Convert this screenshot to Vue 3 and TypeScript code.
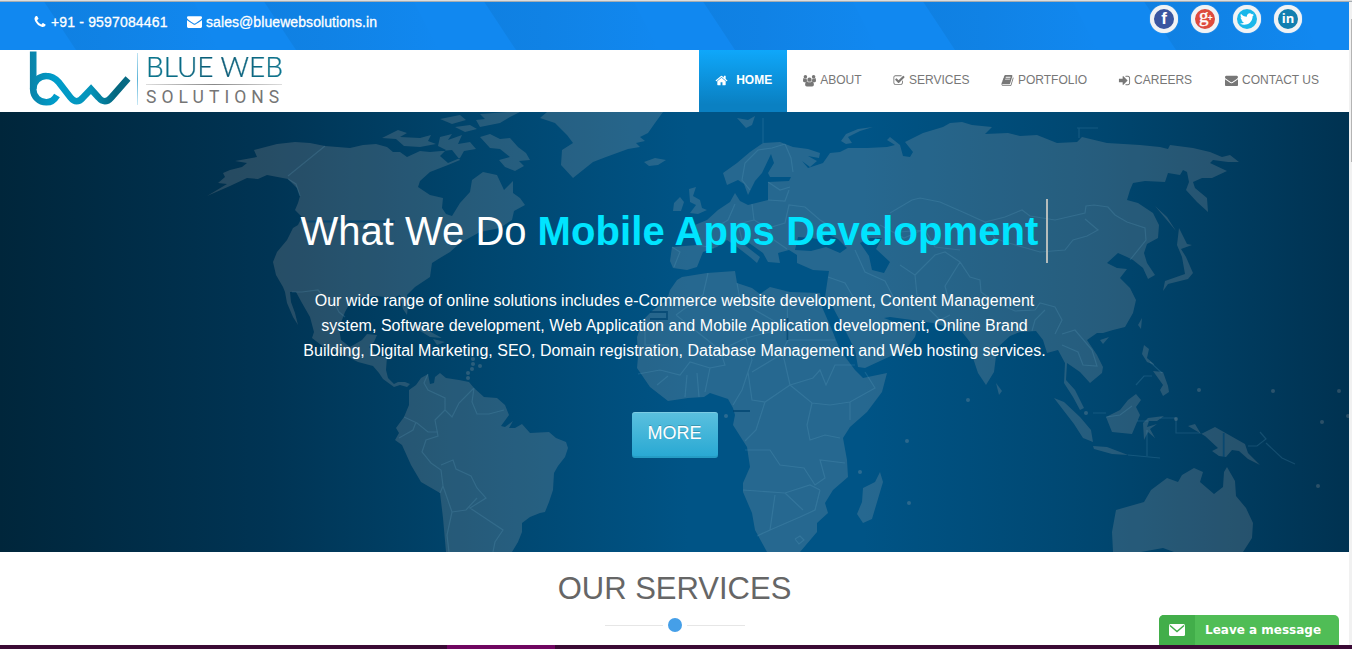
<script setup lang="ts">
interface NavItem { label: string; icon: string; active?: boolean }

const icons: Record<string, string> = {
  phone: 'M1600 1240q0 27-10 70.5t-21 68.5q-21 50-122 106-94 51-186 51-27 0-53-3.5t-57.5-12.5-47-14.5-55.5-20.5-49-18q-98-35-175-83-127-79-264-216t-216-264q-48-77-83-175-3-9-18-49t-20.5-55.5-14.5-47-12.5-57.5-3.5-53q0-92 51-186 56-101 106-122 25-11 68.5-21t70.5-10q14 0 21 3 18 6 53 76 11 19 30 54t35 63.5 31 53.5q3 4 17.5 25t21.5 35.5 7 28.5q0 20-28.5 50t-62 55-62 53-28.5 46q0 9 5 22.5t8.5 20.5 14 24 11.5 19q76 137 174 235t235 174q2 1 19 11.5t24 14 20.5 8.5 22.5 5q18 0 46-28.5t53-62 55-62 50-28.5q14 0 28.5 7t35.5 21.5 25 17.5q25 15 53.5 31t63.5 35 54 30q70 35 76 53 3 7 3 21z',
  mail: 'M1792 710v794q0 66-47 113t-113 47h-1472q-66 0-113-47t-47-113v-794q44 49 101 87 362 246 497 345 57 42 92.5 65.5t94.5 48 110 24.5h2q51 0 110-24.5t94.5-48 92.5-65.5q170-123 498-345 57-39 100-87zm0-294q0 79-49 151t-122 123q-376 261-468 325-10 7-42.5 31t-54 38.5-52 32.5-57.5 27-50 9h-2q-23 0-50-9t-57.5-27-52-32.5-54-38.5-42.5-31q-91-64-262-182.5t-205-142.5q-62-42-117-115.5t-55-136.5q0-78 41.5-130t118.5-52h1472q65 0 112.5 47t47.5 113z',
  home: 'M1472 992v480q0 26-19 45t-45 19h-384v-384h-256v384h-384q-26 0-45-19t-19-45v-480q0-1 .5-3t.5-3l575-474 575 474q1 2 1 6zm223-69l-62 74q-8 9-21 11h-3q-13 0-21-7l-692-577-692 577q-12 8-24 7-13-2-21-11l-62-74q-8-10-7-23.5t11-21.5l719-599q32-26 76-26t76 26l244 204v-195q0-14 9-23t23-9h192q14 0 23 9t9 23v408l219 182q10 8 11 21.5t-7 23.5z',
  users: 'M896 480a300 300 0 1 1 0 600a300 300 0 1 1 0-600zM330 128a245 245 0 1 1 0 490a245 245 0 1 1 0-490zM1462 128a245 245 0 1 1 0 490a245 245 0 1 1 0-490zM90 560q80 100 240 100q100 0 190-40q-40 240 100 390q-160 0-250 120h-200q-170 0-170-160q0-400 90-410zM1702 560q-80 100-240 100q-100 0-190-40q40 240-100 390q160 0 250 120h200q170 0 170-160q0-400-90-410zM560 1020q130 120 336 120t336-120q270 10 270 470q0 240-240 240h-732q-240 0-240-240q0-460 270-470z',
  check: 'M1472 930v318q0 119-84.5 203.5t-203.5 84.5h-832q-119 0-203.5-84.5t-84.5-203.5v-832q0-119 84.5-203.5t203.5-84.5h832q63 0 117 25 15 7 18 23 3 17-9 29l-49 49q-10 10-23 10-3 0-9-2-23-6-45-6h-832q-66 0-113 47t-47 113v832q0 66 47 113t113 47h832q66 0 113-47t47-113v-254q0-13 9-22l64-64q10-10 23-10 6 0 12 3 20 8 20 29zm231-489l-814 814q-24 24-57 24t-57-24l-430-430q-24-24-24-57t24-57l110-110q24-24 57-24t57 24l263 263 647-647q24-24 57-24t57 24l110 110q24 24 24 57t-24 57z',
  book: 'M1703 478q40 57 18 129l-275 906q-19 64-76.5 107.5t-122.5 43.5h-923q-77 0-148.5-53.5t-99.5-131.5q-24-67-2-127 0-4 3-27t4-37q1-8-3-21.5t-3-19.5q2-11 8-21t16.5-23.5 16.5-23.5q23-38 45-91.5t30-91.5q3-10 .5-30t-.5-28q3-11 17-28t17-23q21-36 42-92t25-90q1-9-2.5-32t.5-28q4-13 22-30.5t22-22.5q19-26 42.5-84.5t27.5-96.5q1-8-3-25.5t-2-26.5q2-8 9-18t18-23 17-21q8-12 16.5-30.5t15-35 16-36 19.500-32 26.500-23.500 36-11.500 47.500 5.500l-1 3q38-9 51-9h761q74 0 114 56t18 130l-274 906q-36 119-71.500 153.500t-128.500 34.500h-869q-27 0-38 15-11 16-1 43 24 70 144 70h923q29 0 56-15.500t35-41.500l300-987q7-22 5-57 38 15 59 43zm-1064 2q-4 13 2 22.500t20 9.500h608q13 0 25.500-9.500t16.500-22.500l21-64q4-13-2-22.500t-20-9.500h-608q-13 0-25.500 9.500t-16.500 22.500zm-83 256q-4 13 2 22.500t20 9.500h608q13 0 25.500-9.500t16.500-22.500l21-64q4-13-2-22.500t-20-9.500h-608q-13 0-25.500 9.500t-16.500 22.500z',
  signin: 'M1312 896q0 26-19 45l-544 544q-19 19-45 19t-45-19-19-45v-288h-448q-26 0-45-19t-19-45v-384q0-26 19-45t45-19h448v-288q0-26 19-45t45-19 45 19l544 544q19 19 19 45zm352-352v704q0 119-84.5 203.5t-203.5 84.5h-320q-13 0-22.5-9.5t-9.5-22.5q0-4-1-20t-.5-26.5 3-23.5 10-19.5 20.5-6.5h320q66 0 113-47t47-113v-704q0-66-47-113t-113-47h-312l-11.5-1-11.5-3-8-5.5-7-9-2-13.5q0-4-1-20t-.5-26.5 3-23.5 10-19.5 20.5-6.5h320q119 0 203.5 84.5t84.5 203.5z',
  twitter: 'M1684 408q-67 98-162 167 1 14 1 42 0 130-38 259.5t-115.5 248.5-184.5 210.5-258 146-323 54.5q-271 0-496-145 35 4 78 4 225 0 401-138-105-2-188-64.5t-114-159.5q33 5 61 5 43 0 85-11-112-23-185.5-111.5t-73.5-205.5v-4q68 38 146 41-66-44-105-115t-39-154q0-88 44-163 121 149 294.5 238.5t371.5 99.5q-8-38-8-74 0-134 94.5-228.5t228.5-94.5q140 0 236 102 109-21 205-78-37 115-142 178 93-10 186-50z',
}

const nav: NavItem[] = [
  { label: 'HOME', icon: 'home', active: true },
  { label: 'ABOUT', icon: 'users' },
  { label: 'SERVICES', icon: 'check' },
  { label: 'PORTFOLIO', icon: 'book' },
  { label: 'CAREERS', icon: 'signin' },
  { label: 'CONTACT US', icon: 'mail' },
]

const bands: number[] = [-177, 43, 263, 483, 702, 922, 1143]

const land: string[] = [
  // North and Central America
  'M207 196L230 186 247 178 258 179 267 175 288 179 297 188 300 196 298 203 295 210 302 217 298 225 293 228 287 240 277 252 273 262 276 275 283 287 285 292 287 303 293 317 298 325 295 313 291 302 290 292 296 292 302 303 310 317 314 332 312 338 325 348 344 355 358 362 373 366 379 373 383 379 394 387 400 385 407 387 410 384 405 382 398 382 394 384 388 378 386 370 387 357 377 356 369 347 374 342 377 335 367 334 362 340 350 347 341 340 339 328 345 312 350 303 362 297 377 296 393 298 400 295 403 309 407 315 408 305 407 295 415 287 430 277 432 263 440 258 450 252 460 243 480 232 500 228 512 220 514 211 525 205 520 198 513 193 513 181 504 190 497 175 483 172 472 180 470 192 460 203 452 216 446 214 442 208 443 198 430 195 418 187 420 181 430 172 448 165 460 160 452 150 430 152 420 151 407 157 400 152 393 152 387 147 376 144 363 145 350 148 325 146 310 143 295 142 277 144 254 150 257 157 235 161 247 163 242 167 230 170 223 173 225 177 218 183 227 184z',
  // Arctic islands
  'M382 138L398 130 407 133 400 137 420 138 431 135 428 141 436 144 420 147 404 146 396 139zM440 137L452 134 448 140 462 135 458 144 470 142 476 149 464 151 460 158 448 163 440 156 446 150 438 146zM480 127L500 123 510 117 520 112 507 112 480 114 485 119 476 120zM480 137L490 134 500 139 510 138 518 147 526 153 530 160 519 161 524 166 515 171 505 167 499 160 510 157 500 149 490 148zM440 119L460 115 466 120 452 124zM455 127L470 125 477 129 465 132z',
  // Greenland, Iceland, Svalbard, Novaya Zemlya
  'M540 118L555 123 567 135 573 143 562 150 561 165 573 178 583 170 593 162 606 157 617 153 628 149 640 147 636 143 645 141 640 137 648 133 655 123 663 112 547 112zM644 162L655 158 666 160 658 165 649 166zM737 118L748 120 755 116 752 125 746 128zM873 127L860 131 848 137 852 143 846 144 841 141 846 134 858 129z',
  // South America
  'M409 390L416 385 421 378 428 374 430 384 434 383 435 377 440 373 446 378 459 380 469 382 474 388 484 397 497 398 505 405 509 415 501 426 505 427 513 421 509 428 515 428 522 424 530 433 549 432 556 438 566 442 568 448 565 457 558 466 554 473 553 490 549 502 545 512 540 513 530 517 522 523 522 532 518 542 512 552 446 552 443 518 440 493 421 482 411 465 402 445 395 440 399 433 396 428 404 417 409 405z',
  // British Isles and mainland Eurasia, with the Black and Caspian seas cut out
  'M689 189L696 187 693 196 700 200 702 208 707 210 698 214 690 213 696 205 690 202zM674 203L680 197 684 202 681 211 673 211zM762 173L755 181 748 195 744 184 738 180 727 185 723 173 737 163 750 152 763 143 780 142 793 147 808 149 820 153 819 158 808 156 817 161 810 167 802 161 808 168 823 163 830 153 840 152 848 148 867 148 887 147 895 145 887 140 890 137 900 145 903 156 910 157 913 152 905 142 923 133 943 127 950 123 962 122 972 125 992 127 985 134 1008 133 1020 136 1037 135 1057 143 1077 142 1082 137 1107 143 1140 145 1160 147 1168 149 1170 145 1193 148 1210 152 1222 157 1230 155 1239 162 1228 162 1213 160 1210 163 1227 171 1212 178 1202 178 1193 182 1195 188 1207 198 1208 212 1197 202 1186 190 1189 182 1187 172 1183 170 1180 175 1168 173 1165 182 1145 181 1133 183 1130 190 1127 200 1138 203 1153 213 1159 225 1158 238 1147 244 1144 253 1147 263 1155 275 1148 279 1143 268 1133 260 1127 257 1118 253 1107 263 1117 268 1127 269 1120 278 1130 288 1136 300 1133 313 1125 327 1113 330 1103 333 1097 333 1087 340 1097 355 1103 367 1102 373 1090 383 1080 372 1067 363 1066 380 1075 390 1084 408 1080 410 1073 397 1064 383 1065 363 1058 350 1047 353 1043 340 1036 331 1020 332 1010 336 997 348 994 372 986 385 978 373 973 358 970 342 962 332 950 328 933 323 912 320 890 317 884 318 900 324 905 320 917 330 915 337 905 350 893 355 865 368 858 367 855 350 845 330 830 302 825 297 828 277 829 271 813 270 797 263 797 255 789 250 778 253 780 263 768 262 763 253 745 240 742 243 760 257 757 263 750 257 737 247 727 240 717 247 703 252 697 267 687 270 673 268 670 261 672 247 697 245 700 236 690 227 707 220 718 210 730 202 735 193 740 201 748 205 768 200 768 182 789 181 791 177 770 177 768 173 774 163 771 154zM798 237L795 250 811 251 826 247 840 253 847 248 838 239 826 233 822 240 812 238zM860 243L870 238 882 238 876 249 890 262 884 273 872 270 869 256z',
  // Africa and Madagascar
  'M677 280L682 277 707 273 735 271 737 283 752 288 760 294 770 287 790 292 820 293 822 307 832 330 840 350 855 370 863 378 887 373 882 392 867 412 850 427 843 438 847 460 848 477 833 490 825 503 828 513 817 523 817 532 800 552 767 552 755 530 752 513 743 492 743 483 750 467 747 447 733 425 735 415 733 408 728 399 710 393 704 397 688 398 668 401 650 387 637 368 638 357 637 337 643 320 653 310 667 300 670 290zM880 472L883 482 872 519 863 523 857 514 862 502 863 488 875 482z',
  // Asian islands
  'M996 383L1002 391 999 395zM1054 398L1064 402 1080 417 1091 430 1093 442 1083 438 1074 424zM1093 446L1107 447 1128 455 1112 454 1094 449zM1106 417L1120 410 1128 400 1136 394 1141 400 1136 407 1140 415 1132 434 1112 432zM1143 423L1148 418 1164 416 1157 421 1149 421 1147 427 1157 424 1150 429 1155 438 1148 432 1144 440zM1188 426L1195 424 1201 434 1215 427 1245 444 1248 453 1260 465 1248 459 1239 451 1232 450 1226 457 1219 456 1212 451 1218 448 1205 436zM1144 345L1149 349 1147 358 1155 365 1147 362 1142 354zM1153 371L1163 372 1168 386 1169 392 1163 396 1160 390 1163 385zM1138 325L1142 318 1141 329zM1155 206L1167 217 1176 231 1171 225zM1179 228L1187 244 1192 245 1181 249 1186 257 1193 273 1188 279 1168 284 1163 291 1165 281 1185 274 1182 257 1177 245zM1100 340L1109 337 1103 344z',
  // Australia
  'M1116 510L1144 502 1151 490 1167 478 1178 482 1182 475 1194 468 1203 472 1200 482 1214 494 1223 487 1224 472 1227 467 1235 481 1236 496 1246 508 1253 523 1252 538 1243 552 1174 552 1163 548 1141 552 1113 552 1112 532z',
  // Caribbean
  'M408 326L420 325 429 331 442 338 430 337 417 329zM433 339L445 342 437 345z',
]

const borders: string[] = [
  'M325 146L288 176M288 179L296 184 300 196M292 292L302 292 318 290 324 297 333 300 339 312 345 317',
  'M428 374L424 383 428 390 445 398 445 410 452 417 459 403 474 388M474 388L472 402 477 414 489 414 504 410M445 410L435 420 438 436 426 440 422 452 431 463 441 470 443 486 440 493M404 417L417 423 428 432 438 432M441 465L453 460 456 469 471 476 477 488 486 498 470 508 485 518 503 530 495 542 493 552M443 486L452 512 447 535 449 552M452 512L466 510 477 498M399 438L413 430 416 422',
  'M750 190L742 180 745 163 758 150 772 148 785 144M785 144L791 158 793 172M768 200L785 201 789 190M768 182L780 190 790 187M752 204L754 220 768 228 785 223 789 205 805 207 820 220 835 229M735 204L728 220 718 226M754 220L738 224 742 240M768 228L774 240 787 249M672 247L680 252 674 267M697 245L714 248',
  'M890 213L912 200 920 198 940 202 965 213 985 222 1005 217 1022 210 1030 216 1055 220 1085 213 1086 206 1094 205 1108 207 1115 215 1127 222 1145 228 1146 240 1130 260M985 222L995 238 1005 242 1040 252 1065 250 1073 240 1087 236 1098 230 1085 219M900 265L915 275 917 295 930 310 940 320 950 315M915 275L935 255 945 252 960 262 970 277 980 280 981 292 995 302 1015 311 1035 310 1040 303 1055 307 1062 320 1055 334M960 262L945 286 950 305M1032 331L1035 320 1045 310M1062 334L1075 330 1092 350 1097 366 1083 365 1078 352 1062 345M828 277L845 283 856 302 870 305M855 250L865 272 885 281 900 310M900 232L925 230 935 247 960 250M880 225L904 238 927 228',
  'M708 273L703 295 676 315M737 283L740 300 755 310 786 328M787 292L788 340M788 340H835M645 320V345H669M676 315L720 350 746 338 786 328M720 350L725 365 710 368 705 392M746 338L752 360 742 390 733 405M752 372L780 355 788 340M782 350L790 385 813 378 820 370 826 385 835 365 855 365M790 385L765 402 752 400 748 372M790 385L812 403 830 405 850 402 875 388 865 372M765 402L756 430 745 441M812 403L807 425 810 440 825 435 840 438M850 402L850 420M745 450L770 450 780 465 804 468 815 485 825 478 820 460 845 463M743 490L785 493 810 485 820 490M775 495L770 530 757 536M770 530L800 517 815 510 820 490M785 493L803 510M795 539L800 536 804 540 799 544 795 539M638 374L660 370 680 375 690 362 710 368M657 385L668 376M685 397L687 375M699 397L697 373',
  'M1106 417L1120 415 1132 406M1093 413H1106M1137 421H1148M1160 418H1176V433H1200M1248 446H1257L1266 439 1260 432M1266 443L1282 458 1295 464M1147 430V456M1128 455L1160 458M1136 385L1144 376H1152M1150 362L1162 373M763 118V143M1079 128V138M1077 128H1098',
]

const channels = 'M306 221.500H395M1223.700 433V457M787.500 318V340M650 312H667V319H650M733 411H750'

const dots: number[][] = [[907, 441], [909, 503], [968, 400], [860, 472], [1199, 390], [1273, 391], [1339, 391], [1322, 422], [1348, 416], [1318, 486], [1176, 419], [726, 416], [1086, 413], [473, 359], [473, 364], [472, 369], [468, 373], [480, 366], [468, 378]]
</script>

<template>
  <div class="page">
    <div class="window-edge"></div>
    <div class="body-row">
      <div class="content">
        <div class="topbar">
          <svg class="topbar-bg" width="1349" height="48" viewBox="0 2 1349 48" aria-hidden="true">
            <defs>
              <linearGradient id="band" x1="0" x2="1" y1="0" y2="0">
                <stop offset="0" stop-color="#0f80e2" />
                <stop offset=".35" stop-color="#1082e5" />
                <stop offset="1" stop-color="#1188f0" />
              </linearGradient>
            </defs>
            <polygon v-for="b in bands" :key="b" :points="`${b},0 ${b + 150},0 ${b + 176},50 ${b + 33},50`" fill="url(#band)" />
          </svg>
          <div class="contact">
            <svg class="ic phone" viewBox="0 0 1792 1792"><path :d="icons.phone" /></svg>
            <span class="tel">+91 - 9597084461</span>
            <svg class="ic envelope" viewBox="0 0 1792 1792"><path :d="icons.mail" /></svg>
            <span class="email">sales@bluewebsolutions.in</span>
          </div>
          <div class="social">
            <span class="soc fb"><b>f</b></span>
            <span class="soc gp"><b>g</b><i>+</i></span>
            <span class="soc tw"><svg viewBox="0 0 1792 1792"><path :d="icons.twitter" /></svg></span>
            <span class="soc li"><b>in</b></span>
          </div>
        </div>

        <header class="header">
          <div class="logo">
            <svg width="114" height="60" viewBox="28 50 114 60" aria-hidden="true">
              <defs>
                <linearGradient id="mark" gradientUnits="userSpaceOnUse" x1="30" y1="0" x2="131" y2="0">
                  <stop offset="0" stop-color="#0b83a8" />
                  <stop offset=".25" stop-color="#009dcb" />
                  <stop offset=".6" stop-color="#0593b9" />
                  <stop offset=".85" stop-color="#03677f" />
                  <stop offset="1" stop-color="#0a6c86" />
                </linearGradient>
                <linearGradient id="rule" x1="0" x2="0" y1="0" y2="1">
                  <stop offset="0" stop-color="#bfe3f2" />
                  <stop offset=".5" stop-color="#5cb4d8" />
                  <stop offset="1" stop-color="#c9e8f5" />
                </linearGradient>
              </defs>
              <g fill="none" stroke="url(#mark)" stroke-width="6.6" stroke-linejoin="miter">
                <path d="M33.200 51.500V89.500A13 13 0 0 0 46.500 102.300Q53 102.300 57 95.500" />
                <path d="M33.200 89A13 13 0 0 1 46.500 76Q53 76 58.500 82L70.500 97.500Q76.500 105 83 97.500L91 89.200L98.500 97.500Q104.800 105 111.300 97.500L128 78.500" />
              </g>
              <rect x="137" y="53" width="1" height="52" fill="url(#rule)" />
            </svg>
            <div class="logo-text">
              <span class="l1">BLUE WEB</span>
              <span class="l-rule"></span>
              <span class="l2">SOLUTIONS</span>
            </div>
          </div>
          <nav class="nav">
            <a v-for="n in nav" :key="n.label" :class="['item', n.icon, { active: n.active }]">
              <svg class="ic" viewBox="0 0 1792 1792"><path :d="icons[n.icon]" /></svg><span>{{ n.label }}</span>
            </a>
          </nav>
        </header>

        <section class="hero">
          <svg class="map" width="1349" height="440" viewBox="0 112 1349 440" aria-hidden="true">
            <path :d="land.join('')" fill="rgba(255,222,200,.15)" fill-rule="evenodd" />
            <path :d="borders.join('')" fill="none" stroke="rgba(120,185,215,.17)" stroke-width="1.2" />
            <path :d="channels" fill="none" stroke="rgba(0,68,112,.75)" stroke-width="1.8" />
            <circle v-for="(d, i) in dots" :key="i" :cx="d[0]" :cy="d[1]" r="2" fill="rgba(255,222,200,.17)" />
          </svg>
          <h1><span class="lead">What We Do</span><span class="typed">Mobile Apps Development</span><span class="caret"></span></h1>
          <p>
            <span class="p1">Our wide range of online solutions includes e-Commerce website development, Content Management</span>
            <span class="p2">system, Software development, Web Application and Mobile Application development, Online Brand</span>
            <span class="p3">Building, Digital Marketing, SEO, Domain registration, Database Management and Web hosting services.</span>
          </p>
          <button class="more">MORE</button>
        </section>

        <section class="services">
          <h2>OUR SERVICES</h2>
          <div class="divider"><span></span><i></i><span></span></div>
        </section>
      </div>
      <div class="scroll"><div class="thumb"></div></div>
    </div>
    <div class="footer-strip"></div>
    <div class="chat">
      <div class="chat-icon">
        <svg width="16" height="12" viewBox="0 0 16 12"><rect width="16" height="12" rx="1.500" fill="#fff" /><path d="M1 1.500L8 7.500L15 1.500" fill="none" stroke="#42ae4a" stroke-width="1.500" /></svg>
      </div>
      <span class="chat-label">Leave a message</span>
    </div>
  </div>
</template>

<style>
html, body { margin: 0; overflow: hidden; background: #fff; }
</style>

<style scoped>
.page { position: relative; width: 1352px; height: 649px; overflow: hidden; background: #fff; font-family: "Liberation Sans", Arial, sans-serif; display: flex; flex-direction: column; }
.window-edge { height: 1px; flex: none; background: #dcdcdc; border-bottom: 1px solid #a5acb2; }
.body-row { display: flex; height: 643px; flex: none; }
.content { width: 1349px; flex: none; }
.topbar { position: relative; height: 48px; background: #1188f0; display: flex; justify-content: space-between; overflow: hidden; }
.topbar-bg { position: absolute; left: 0; top: 0; }
.contact { position: relative; display: flex; align-items: center; height: 39px; padding-left: 33px; color: #fff; font-size: 14px; white-space: nowrap; -webkit-text-stroke: .3px #fff; }
.ic { display: block; fill: currentColor; flex: none; }
.phone { width: 14px; height: 14px; margin-right: 4px; }
.envelope { width: 15px; height: 15px; margin-right: 4px; }
.tel { width: 136px; letter-spacing: .16px; }
.email { letter-spacing: .08px; }
.social { position: relative; display: flex; gap: 13.300px; padding: 3px 47px 0 0; }
.soc { box-sizing: border-box; width: 28px; height: 28px; border-radius: 50%; border: 4px solid #f1f3f5; display: flex; align-items: center; justify-content: center; color: #fff; box-shadow: 0 0 1px #d5e6f5; }
.fb { background: #3a56a0; }
.fb b { font: bold 17px/20px "Liberation Sans", sans-serif; }
.gp { background: #dd4b3e; }
.gp b { font: 19px/14px "Liberation Serif", serif; margin: -6px 0 0 1px; -webkit-text-stroke: .4px #fff; }
.gp i { font: normal bold 9px/10px "Liberation Sans", sans-serif; margin: -3px 0 0 -1px; }
.tw { background: #1ab7ea; }
.tw svg { width: 16px; height: 16px; fill: #fff; }
.li { background: #127fb0; }
.li b { font: bold 13px/16px "Open Sans", sans-serif; margin-top: -2px; }

.header { height: 62px; display: flex; justify-content: space-between; background: #fff; }
.logo { display: flex; padding-left: 28px; }
.logo-text { display: flex; flex-direction: column; width: 150px; margin-left: 4px; white-space: nowrap; }
.l1 { height: 34px; font: 300 28px/32px Lato, sans-serif; letter-spacing: 0; background: linear-gradient(90deg, #06788f, #0b5873 50%, #0a7c94); -webkit-background-clip: text; background-clip: text; color: transparent; -webkit-text-stroke: .2px #0d6f8a; }
.l-rule { width: 136px; height: 1px; background: linear-gradient(90deg, #ddd, #888 50%, #ddd); }
.l2 { font: 400 17.500px/25px Roboto, sans-serif; letter-spacing: 5.050px; color: #757575; }
.nav { display: flex; padding-right: 14px; color: #777; font-size: 12px; }
.item { display: flex; align-items: center; height: 60px; padding: 0 16px; white-space: nowrap; }
.item .ic { width: 13px; height: 13px; margin-right: 4px; }
.item.check .ic { width: 12px; margin-right: 3.500px; }
.item.book .ic { margin-right: 3.500px; }
.item.signin { padding-left: 15px; }
.item.signin .ic { margin-right: 3px; }
.item.mail { padding-left: 17px; }
.item.active { margin-top: -1px; height: 62px; padding: 0 15px 1px 16px; background: linear-gradient(#0fa8fb, #0a80c2 88%); color: #fff; font-weight: bold; }
.item.active .ic { margin-right: 8px; }

.hero { position: relative; height: 440px; background: linear-gradient(90deg, #00263b 0%, #003454 20%, #00456d 35%, #005486 51%, #005486 64%, #00466f 82%, #003251 100%); color: #fff; display: flex; flex-direction: column; align-items: center; }
.map { position: absolute; left: 0; top: 0; }
h1 { position: relative; margin: 87px 0 0; height: 64px; display: flex; align-items: center; font-size: 40px; font-weight: 400; white-space: nowrap; }
.lead { margin-right: 11px; }
.typed { font-weight: 700; color: #00e4ff; letter-spacing: .1px; }
.caret { width: 2px; height: 64px; margin-left: 8px; background: #b5bcbb; }
p { position: relative; margin: 25px 0 0; font-size: 16px; line-height: 25px; text-align: center; }
p span { display: block; white-space: nowrap; }
.p2 { word-spacing: .15px; }
.more { position: relative; box-sizing: border-box; width: 86px; height: 46px; margin-top: 49px; padding: 0 0 4px; border: 0; border-radius: 3px; background: linear-gradient(#5bc0de, #27a8d3); box-shadow: inset 0 1px 0 rgba(255,255,255,.2), inset 0 -2px 0 rgba(0,0,0,.07); color: #fff; font: 18px "Liberation Sans", Arial, sans-serif; text-shadow: 0 -1px 0 rgba(0,0,0,.2); }

.services { height: 93px; display: flex; flex-direction: column; align-items: center; }
h2 { margin: 19px 0 0; font-size: 31px; line-height: 36px; font-weight: 400; color: #666; white-space: nowrap; }
.divider { display: flex; align-items: center; gap: 5px; margin-top: 11px; }
.divider span { width: 58px; height: 1px; background: #e6e6e6; }
.divider i { width: 14px; height: 14px; border-radius: 50%; background: #459fe8; }
.scroll { width: 3px; height: 643px; background: #f1f1f1; }
.thumb { width: 1px; height: 143px; margin: 17px 0 0 2px; background: #b4b4b4; }
.footer-strip { height: 4px; flex: none; background: linear-gradient(90deg, #3b0a35 0 447px, #6f0660 447px 555px, #3b0a35 555px); }
.chat { position: absolute; left: 1159px; top: 615px; width: 180px; height: 30px; border-radius: 5px 5px 0 0; overflow: hidden; background: #50bd56; display: flex; align-items: center; color: #fff; font: bold 12px "DejaVu Sans", sans-serif; white-space: nowrap; }
.chat-icon { width: 36px; height: 30px; margin-right: 10px; background: #42ae4a; display: flex; align-items: center; justify-content: center; }
.chat-label { padding-bottom: 1px; }
</style>
